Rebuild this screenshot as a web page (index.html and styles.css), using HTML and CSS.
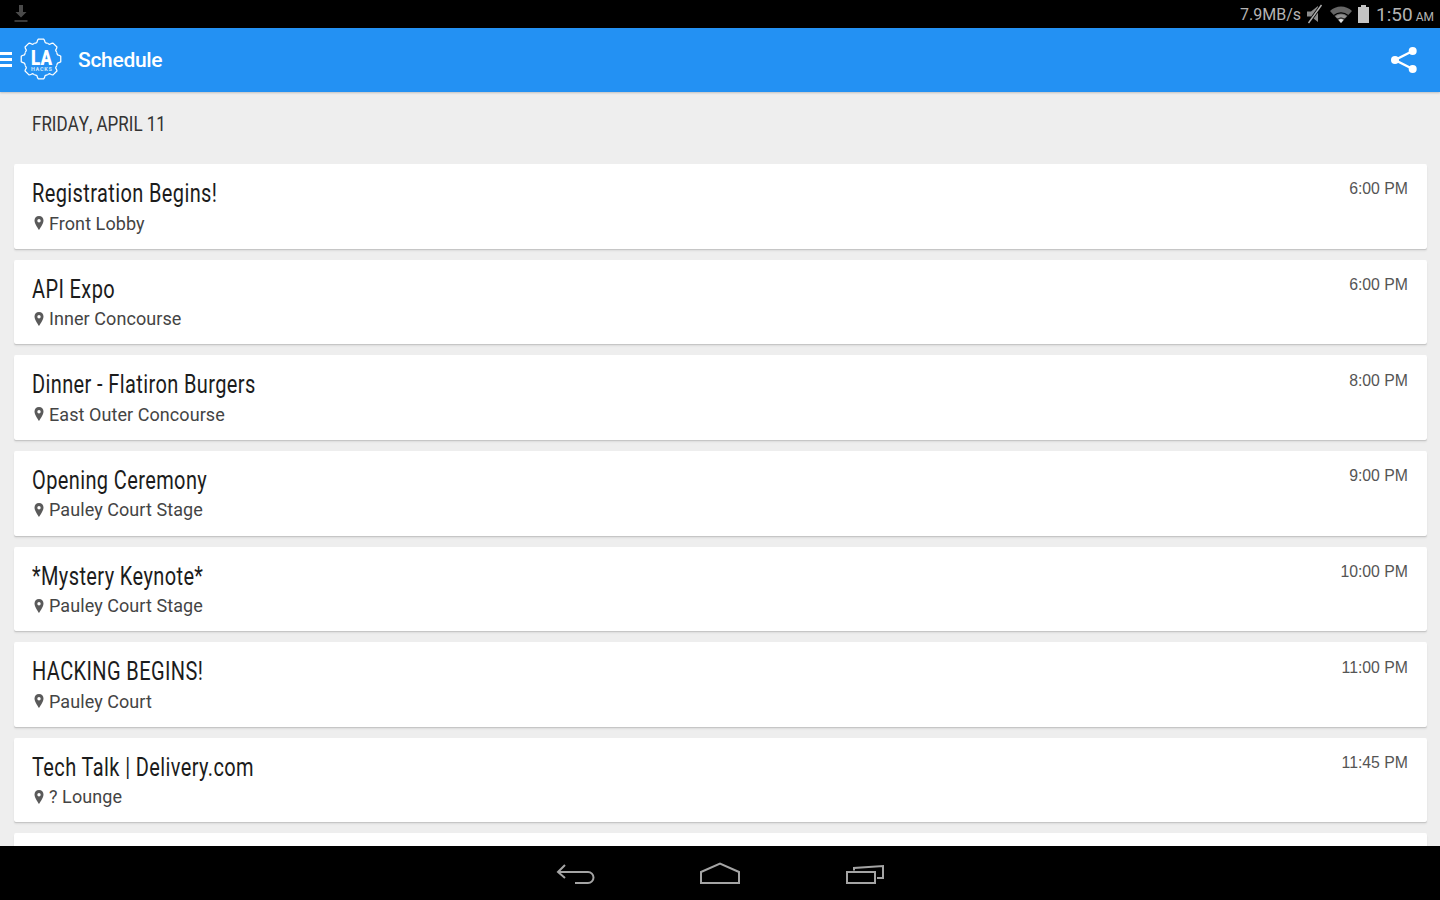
FILE: index.html
```html
<!DOCTYPE html>
<html lang="en">
<head>
<meta charset="utf-8">
<title>Schedule</title>
<link rel="stylesheet" href="styles.css">
</head>
<body>
<svg class="defs" width="0" height="0" aria-hidden="true"><defs>
  <symbol id="pin" viewBox="0 0 10 14"><path fill-rule="evenodd" d="M5 0C2.200 0 .5 2.100.5 4.600.5 8 5 14 5 14s4.500-6 4.500-9.400C9.500 2.100 7.800 0 5 0zm0 3a1.700 1.700 0 1 1 0 3.400A1.700 1.700 0 0 1 5 3z" fill="#5a5a5a"/></symbol>
</defs></svg>
<div class="status">
  <svg class="dl" width="16" height="20" viewBox="0 0 16 20"><path d="M6 1h4v7h3.500L8 13.500 2.500 8H6z" fill="#4a4a4a"/><rect x="1.500" y="16" width="13" height="2" fill="#3a3a3a"/></svg>
  <div class="status-right">
    <span class="speed">7.9MB/s</span>
    <svg class="mute" width="17" height="20" viewBox="0 0 17 20"><path d="M1 7.500h4L12 2v16l-7-5.500H1z" fill="#8c8c8c"/><path d="M15.500 1 2.500 19" stroke="#000" stroke-width="3"/><path d="M15.500 1 2.500 19" stroke="#b0b0b0" stroke-width="1.400"/></svg>
    <svg class="wifi" width="22" height="17" viewBox="0 0 22 17"><path d="M0 5C6-1 16-1 22 5L11 17z" fill="#666"/><path d="M4 9.500C8 6 14 6 18 9.500M7.200 13C9.500 11.300 12.500 11.300 14.800 13" fill="none" stroke="#000" stroke-width="1.400"/><path d="M5.500 10.200C8.800 7.800 13.200 7.800 16.500 10.200L14.200 12.700C12 11.200 10 11.200 7.800 12.700z" fill="#909090"/><path d="M8.500 14C10 12.800 12 12.800 13.500 14L11 17z" fill="#e0e0e0"/></svg>
    <svg class="batt" width="13" height="20" viewBox="0 0 13 20"><path d="M4 1h5v2h3v16H1V3h3z" fill="#c4c4c4"/></svg>
    <span class="clock">1:50<span class="ampm"> AM</span></span>
  </div>
</div>
<header class="appbar">
  <div class="burger"><i></i><i></i><i></i></div>
  <svg class="logo" width="44" height="44" viewBox="0 0 44 44">
    <defs><path id="tooth" d="M15.110 5.370Q16.500 5.300 17.650 4.530Q18.300 1.900 19.080 1.200H24.920Q25.700 1.900 26.350 4.530Q27.500 5.300 28.890 5.370" fill="none" stroke="#fff" stroke-width="1.300" stroke-linejoin="round"/></defs>
    <g transform="translate(22 22) scale(.95) translate(-22 -22)">
      <use href="#tooth"/>
      <use href="#tooth" transform="rotate(45 22 22)"/>
      <use href="#tooth" transform="rotate(90 22 22)"/>
      <use href="#tooth" transform="rotate(135 22 22)"/>
      <use href="#tooth" transform="rotate(180 22 22)"/>
      <use href="#tooth" transform="rotate(225 22 22)"/>
      <use href="#tooth" transform="rotate(270 22 22)"/>
      <use href="#tooth" transform="rotate(315 22 22)"/>
    </g>
    <text class="logo-la" x="12" y="28" textLength="21" lengthAdjust="spacingAndGlyphs">LA</text>
    <text class="logo-hacks" x="12" y="33.500" textLength="21" lengthAdjust="spacing">HACKS</text>
  </svg>
  <h1 class="title">Schedule</h1>
  <svg class="share" width="28" height="28" viewBox="0 0 28 28"><path d="M22.700 5 5 14l17.700 9" fill="none" stroke="#fff" stroke-width="2.400"/><circle cx="22.700" cy="5" r="4" fill="#fff"/><circle cx="5" cy="14" r="4" fill="#fff"/><circle cx="22.700" cy="23" r="4" fill="#fff"/></svg>
</header>
<main class="content">
  <h2 class="date">FRIDAY, APRIL 11</h2>
  <ul class="list">
    <li class="card"><div><div class="name"><span>Registration Begins!</span></div><div class="place"><svg class="pin" width="10" height="14"><use href="#pin"/></svg>Front Lobby</div></div><time class="time">6:00 PM</time></li>
    <li class="card"><div><div class="name"><span>API Expo</span></div><div class="place"><svg class="pin" width="10" height="14"><use href="#pin"/></svg>Inner Concourse</div></div><time class="time">6:00 PM</time></li>
    <li class="card"><div><div class="name"><span>Dinner - Flatiron Burgers</span></div><div class="place"><svg class="pin" width="10" height="14"><use href="#pin"/></svg>East Outer Concourse</div></div><time class="time">8:00 PM</time></li>
    <li class="card"><div><div class="name"><span>Opening Ceremony</span></div><div class="place"><svg class="pin" width="10" height="14"><use href="#pin"/></svg>Pauley Court Stage</div></div><time class="time">9:00 PM</time></li>
    <li class="card"><div><div class="name"><span>*Mystery Keynote*</span></div><div class="place"><svg class="pin" width="10" height="14"><use href="#pin"/></svg>Pauley Court Stage</div></div><time class="time">10:00 PM</time></li>
    <li class="card"><div><div class="name"><span>HACKING BEGINS!</span></div><div class="place"><svg class="pin" width="10" height="14"><use href="#pin"/></svg>Pauley Court</div></div><time class="time">11:00 PM</time></li>
    <li class="card"><div><div class="name"><span>Tech Talk | Delivery.com</span></div><div class="place"><svg class="pin" width="10" height="14"><use href="#pin"/></svg>? Lounge</div></div><time class="time">11:45 PM</time></li>
    <li class="card"></li>
  </ul>
</main>
<nav class="navbar">
  <svg width="40" height="24" viewBox="0 0 40 24"><path d="M10 4 3 11l7 6M3 11h30a5.500 5.500 0 0 1 0 11H20" fill="none" stroke="#a4a4a4" stroke-width="2"/></svg>
  <svg width="42" height="24" viewBox="0 0 42 24"><path d="M2 22V11L21 2.500 40 11v11z" fill="none" stroke="#a4a4a4" stroke-width="2"/></svg>
  <svg width="40" height="24" viewBox="0 0 40 24"><path d="M2 11h28v11H2zM9 9.500V7L38 5v12h-6" fill="none" stroke="#a4a4a4" stroke-width="2"/></svg>
</nav>
</body>
</html>
```

FILE: styles.css
```css
* { box-sizing: border-box; }
html, body { margin: 0; height: 100%; }
body {
  width: 1440px;
  height: 900px;
  overflow: hidden;
  display: flex;
  flex-direction: column;
  background: #eeeeee;
  font-family: Roboto, "Liberation Sans", sans-serif;
}
.defs { position: absolute; }
.status {
  height: 28px;
  flex: none;
  background: #000;
  display: flex;
  align-items: center;
  justify-content: space-between;
  padding: 0 6px 0 13px;
}
.status-right { display: flex; align-items: center; color: #b4b4b4; }
.speed { font-size: 16px; margin-right: 5px; }
.mute { margin-right: 7px; }
.wifi { margin-right: 5px; }
.batt { margin-right: 6px; }
.clock { font-size: 19px; }
.ampm { font-size: 12px; }
.appbar {
  height: 63.500px;
  flex: none;
  background: #2391f3;
  display: flex;
  align-items: center;
  color: #fff;
  position: relative;
  z-index: 1;
  box-shadow: 0 1px 2px rgba(0,0,0,.2);
}
.burger { width: 12px; display: flex; flex-direction: column; gap: 3px; margin-right: 7px; }
.burger i { display: block; height: 3px; background: #fff; }
.logo { margin-right: 15px; margin-top: -1px; }
.logo-la { font-size: 21px; font-weight: 900; fill: #fff; }
.logo-hacks { font-size: 5.500px; font-weight: 900; fill: #bfe0fb; }
.title { margin: 0; font-size: 21px; font-weight: 500; flex: 1; letter-spacing: -.3px; }
.share { margin-right: 22px; }
.content { flex: 1; min-height: 0; overflow: hidden; }
.date {
  margin: 0;
  padding: 20.500px 0 0 32px;
  height: 72.500px;
  font-size: 20px;
  line-height: 24px;
  font-weight: 400;
  color: #333;
  font-kerning: none;
  transform: scaleX(.85);
  transform-origin: 32px 0;
}
.list { list-style: none; margin: 0; padding: 0 13.500px; display: flex; flex-direction: column; gap: 11px; }
.card {
  height: 84.650px;
  flex: none;
  background: #fff;
  border-radius: 2px;
  box-shadow: 0 1px 0 #c6c6c6, 0 2px 2px rgba(0,0,0,.08);
  display: flex;
  justify-content: space-between;
  padding: 15px 18.500px 0;
}
.name { font-size: 25px; line-height: 30px; color: #1c1c1c; white-space: nowrap; letter-spacing: .48px; }
.name span { display: inline-block; transform: scaleX(.8); transform-origin: 0 0; }
.place { display: flex; align-items: center; gap: 5px; margin-top: 3.500px; padding-left: 2px; font-size: 18px; line-height: 21px; letter-spacing: .07px; color: #444; }
.time { font-family: "Liberation Sans", Arial, sans-serif; font-size: 15.800px; line-height: 20px; margin-top: .4px; color: #555; }
.navbar {
  height: 54px;
  flex: none;
  background: #000;
  display: flex;
  justify-content: center;
  align-items: center;
  gap: 104px;
}
```
